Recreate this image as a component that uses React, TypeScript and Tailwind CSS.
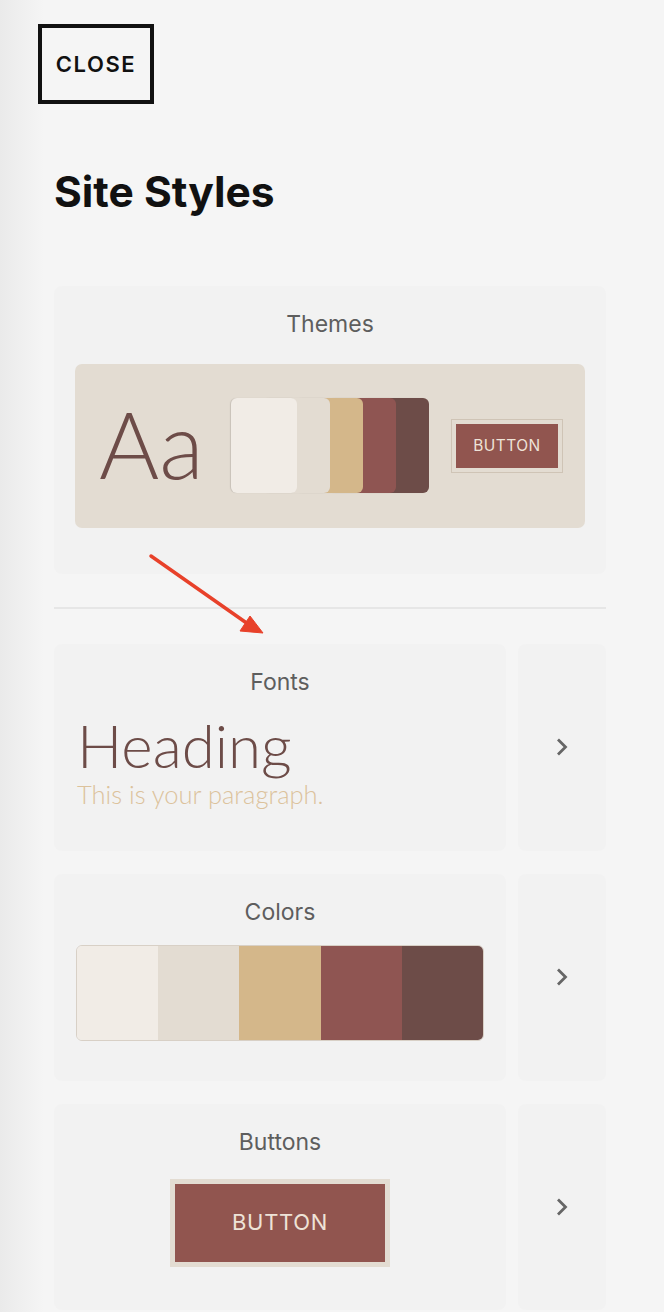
import React from "react";

const swatches = ["#f1ece6", "#e3dcd2", "#d4b78a", "#8f5552", "#6d4c48"];
const stackZ = ["z-50", "z-40", "z-30", "z-20", "z-10"];

function Chevron() {
  return (
    <svg width="14" height="20" viewBox="0 0 14 20" fill="none">
      <path d="M3 2.5 L10.5 10 L3 17.5" stroke="#666666" strokeWidth="2.8" strokeLinecap="butt" strokeLinejoin="miter" />
    </svg>
  );
}

function CardLabel({ children }: { children: React.ReactNode }) {
  return <div className="text-center text-[23px] leading-6 text-[#5e5e5e]">{children}</div>;
}

function SideCard() {
  return (
    <div className="w-[88px] shrink-0 rounded-[8px] bg-[#f2f2f2] flex items-center justify-center">
      <Chevron />
    </div>
  );
}

export default function App() {
  return (
    <div
      className="relative w-full min-h-[1312px] bg-[linear-gradient(to_right,#eaeaea,#f5f5f5_44px)] text-[#111]"
      style={{ fontFamily: "Inter, 'Liberation Sans', sans-serif" }}
    >
      {/* Close button */}
      <div className="pt-[24px] pl-[38px]">
        <button className="w-[116px] h-[80px] border-4 border-[#111] flex items-center justify-center text-[22px] font-semibold tracking-[0.07em] text-[#111]">
          CLOSE
        </button>
      </div>

      <div className="pl-[54px] pr-[58px]">
        <h1 className="mt-[67px] text-[42.5px] leading-none font-bold text-[#111]">Site Styles</h1>

        {/* Themes */}
        <div className="mt-[72px] h-[288px] rounded-[8px] bg-[#f2f2f2] pt-[26px] px-[21px]">
          <CardLabel>Themes</CardLabel>
          <div className="mt-[28px] h-[164px] rounded-[7px] bg-[#e3dcd2] flex items-center pl-[24px]">
            <div
              className="w-[106px] text-[92px] leading-none font-light text-[#6d4c48] -mt-[4px]"
              style={{ fontFamily: "Lato, 'Liberation Sans', sans-serif" }}
            >
              Aa
            </div>
            <div className="ml-[26px] flex">
              {swatches.map((c, i) => (
                <div
                  key={c}
                  className={`relative ${stackZ[i]} w-[66px] h-[95px] rounded-[6px] ${i > 0 ? "-ml-[33px]" : ""} shadow-[-1px_0_1px_rgba(0,0,0,0.12)]`}
                  style={{ backgroundColor: c }}
                />
              ))}
            </div>
            <div className="ml-[22px] border border-[#cfc4b6] p-[4px]">
              <div className="w-[102px] h-[44px] bg-[#91554f] flex items-center justify-center text-[15.5px] tracking-[0.03em] text-[#eee3d8]">
                BUTTON
              </div>
            </div>
          </div>
        </div>

        <div className="mt-[33px] h-[2px] bg-[#e6e6e6]" />

        {/* Fonts */}
        <div className="mt-[35px] flex gap-[12px] h-[207px]">
          <div className="flex-1 rounded-[8px] bg-[#f2f2f2] pt-[26px] px-[23px]">
            <CardLabel>Fonts</CardLabel>
            <div style={{ fontFamily: "Lato, 'Liberation Sans', sans-serif" }}>
              <div className="mt-[21px] text-[60px] leading-none font-light text-[#6d4c48]">Heading</div>
              <div className="mt-[7px] text-[25.5px] leading-none font-light text-[#dcc29c]">This is your paragraph.</div>
            </div>
          </div>
          <SideCard />
        </div>

        {/* Colors */}
        <div className="mt-[23px] flex gap-[12px] h-[207px]">
          <div className="flex-1 rounded-[8px] bg-[#f2f2f2] pt-[26px] px-[22px]">
            <CardLabel>Colors</CardLabel>
            <div className="mt-[21px] h-[96px] w-[408px] rounded-[6px] overflow-hidden flex border border-[#d8d0c6]">
              {swatches.map((c) => (
                <div key={c} className="flex-1" style={{ backgroundColor: c }} />
              ))}
            </div>
          </div>
          <SideCard />
        </div>

        {/* Buttons */}
        <div className="mt-[23px] flex gap-[12px] h-[206px]">
          <div className="flex-1 rounded-[8px] bg-[#f2f2f2] pt-[26px] px-[22px]">
            <CardLabel>Buttons</CardLabel>
            <div className="mt-[25px] flex justify-center">
              <div className="border-[5px] border-[#e3dcd2]">
                <div className="w-[210px] h-[78px] bg-[#91554f] flex items-center justify-center text-[22px] tracking-[0.03em] text-[#eee3d8]">
                  BUTTON
                </div>
              </div>
            </div>
          </div>
          <SideCard />
        </div>
      </div>

      {/* Annotation arrow */}
      <svg className="absolute left-0 top-0 pointer-events-none" width="664" height="700" viewBox="0 0 664 700">
        <line x1="151" y1="556" x2="248" y2="624" stroke="#e8412a" strokeWidth="3.5" strokeLinecap="round" />
        <polygon points="263,633 240,631 250,616" fill="#e8412a" stroke="#e8412a" strokeWidth="1" strokeLinejoin="round" />
      </svg>
    </div>
  );
}
